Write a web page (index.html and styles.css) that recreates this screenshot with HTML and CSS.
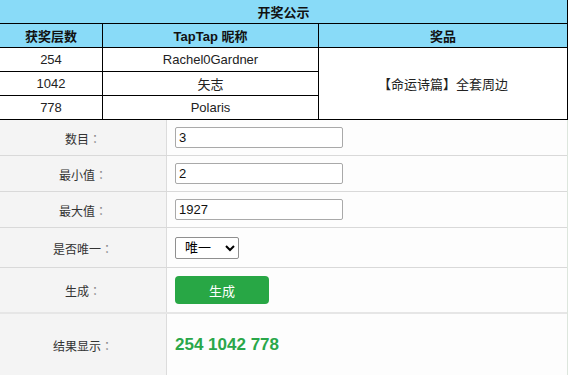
FILE: index.html
```html
<!DOCTYPE html>
<html lang="zh-CN">
<head>
  <meta charset="UTF-8">
  <title>开奖公示</title>
  <link rel="stylesheet" href="styles.css">
</head>
<body>
  <table class="draw">
    <colgroup>
      <col class="col-floor">
      <col class="col-name">
      <col class="col-prize">
    </colgroup>
    <tr><th colspan="3">开奖公示</th></tr>
    <tr><th>获奖层数</th><th>TapTap 昵称</th><th>奖品</th></tr>
    <tr><td>254</td><td>Rachel0Gardner</td><td rowspan="3">【命运诗篇】全套周边</td></tr>
    <tr><td>1042</td><td>矢志</td></tr>
    <tr><td>778</td><td>Polaris</td></tr>
  </table>

  <div class="form">
    <div class="row">
      <div class="label">数目<span class="colon">：</span></div>
      <div class="value"><input type="text" value="3"></div>
    </div>
    <div class="row">
      <div class="label">最小值<span class="colon">：</span></div>
      <div class="value"><input type="text" value="2"></div>
    </div>
    <div class="row">
      <div class="label">最大值<span class="colon">：</span></div>
      <div class="value"><input type="text" value="1927"></div>
    </div>
    <div class="row row-select">
      <div class="label">是否唯一<span class="colon">：</span></div>
      <div class="value">
        <select>
          <option>唯一</option>
          <option>不唯一</option>
        </select>
      </div>
    </div>
    <div class="row row-button">
      <div class="label">生成<span class="colon">：</span></div>
      <div class="value"><button>生成</button></div>
    </div>
    <div class="row row-result">
      <div class="label">结果显示<span class="colon">：</span></div>
      <div class="value"><span class="result">254 1042 778</span></div>
    </div>
  </div>
</body>
</html>
```

FILE: styles.css
```css
body {
  margin: 0;
  overflow: hidden;
  font-family: "Liberation Sans", Arial, "Noto Sans CJK SC", sans-serif;
  color: #222;
  background: #fff;
}
.draw {
  border-collapse: collapse;
  table-layout: fixed;
  width: 569px;
  margin: -1px 0 0 -1px;
  font-size: 13px;
}
.col-floor {
  width: 103px;
}
.col-name {
  width: 216px;
}
.draw th,
.draw td {
  border: 1px solid #000;
  height: 23px;
  padding: 0;
  text-align: center;
}
.draw th {
  background: #89dbf8;
  font-weight: bold;
  color: #111;
}
.form {
  width: 567px;
  border-right: 1px solid #dde6dd;
}
.row {
  display: grid;
  grid-template-columns: 167px 1fr;
  height: 35px;
  border-bottom: 1px solid #d9d9d9;
}
.row-select {
  height: 39px;
}
.row-button {
  height: 44px;
  border-bottom: 2px solid #e6e6e6;
}
.row-result {
  height: 62px;
  border-bottom: none;
}
.label {
  display: flex;
  align-items: center;
  justify-content: center;
  padding-top: 1px;
  background: #f4f4f4;
  border-right: 1px solid #dcdcdc;
  font-size: 12px;
  color: #333;
}
.colon {
  font-family: "Noto Sans CJK TC", sans-serif;
  color: #888;
}
.value {
  display: flex;
  align-items: center;
  padding-left: 8px;
  background: #fdfdfd;
}
input[type="text"] {
  box-sizing: border-box;
  width: 168px;
  height: 21px;
  padding: 0 3px;
  border: 1px solid #a9a9a9;
  border-radius: 2px;
  font-family: inherit;
  font-size: 13px;
  color: #111;
}
select {
  box-sizing: border-box;
  width: 64px;
  height: 22px;
  border: 1px solid #8f8f8f;
  border-radius: 2px;
  font-family: inherit;
  font-size: 13px;
  padding: 0 0 0 5px;
  background: #fff;
}
button {
  width: 94px;
  height: 28px;
  border: none;
  border-radius: 4px;
  background: #28a745;
  color: #fff;
  font-family: inherit;
  font-size: 13px;
  cursor: pointer;
}
.result {
  font-size: 17px;
  font-weight: bold;
  color: #2aa74a;
}
```
